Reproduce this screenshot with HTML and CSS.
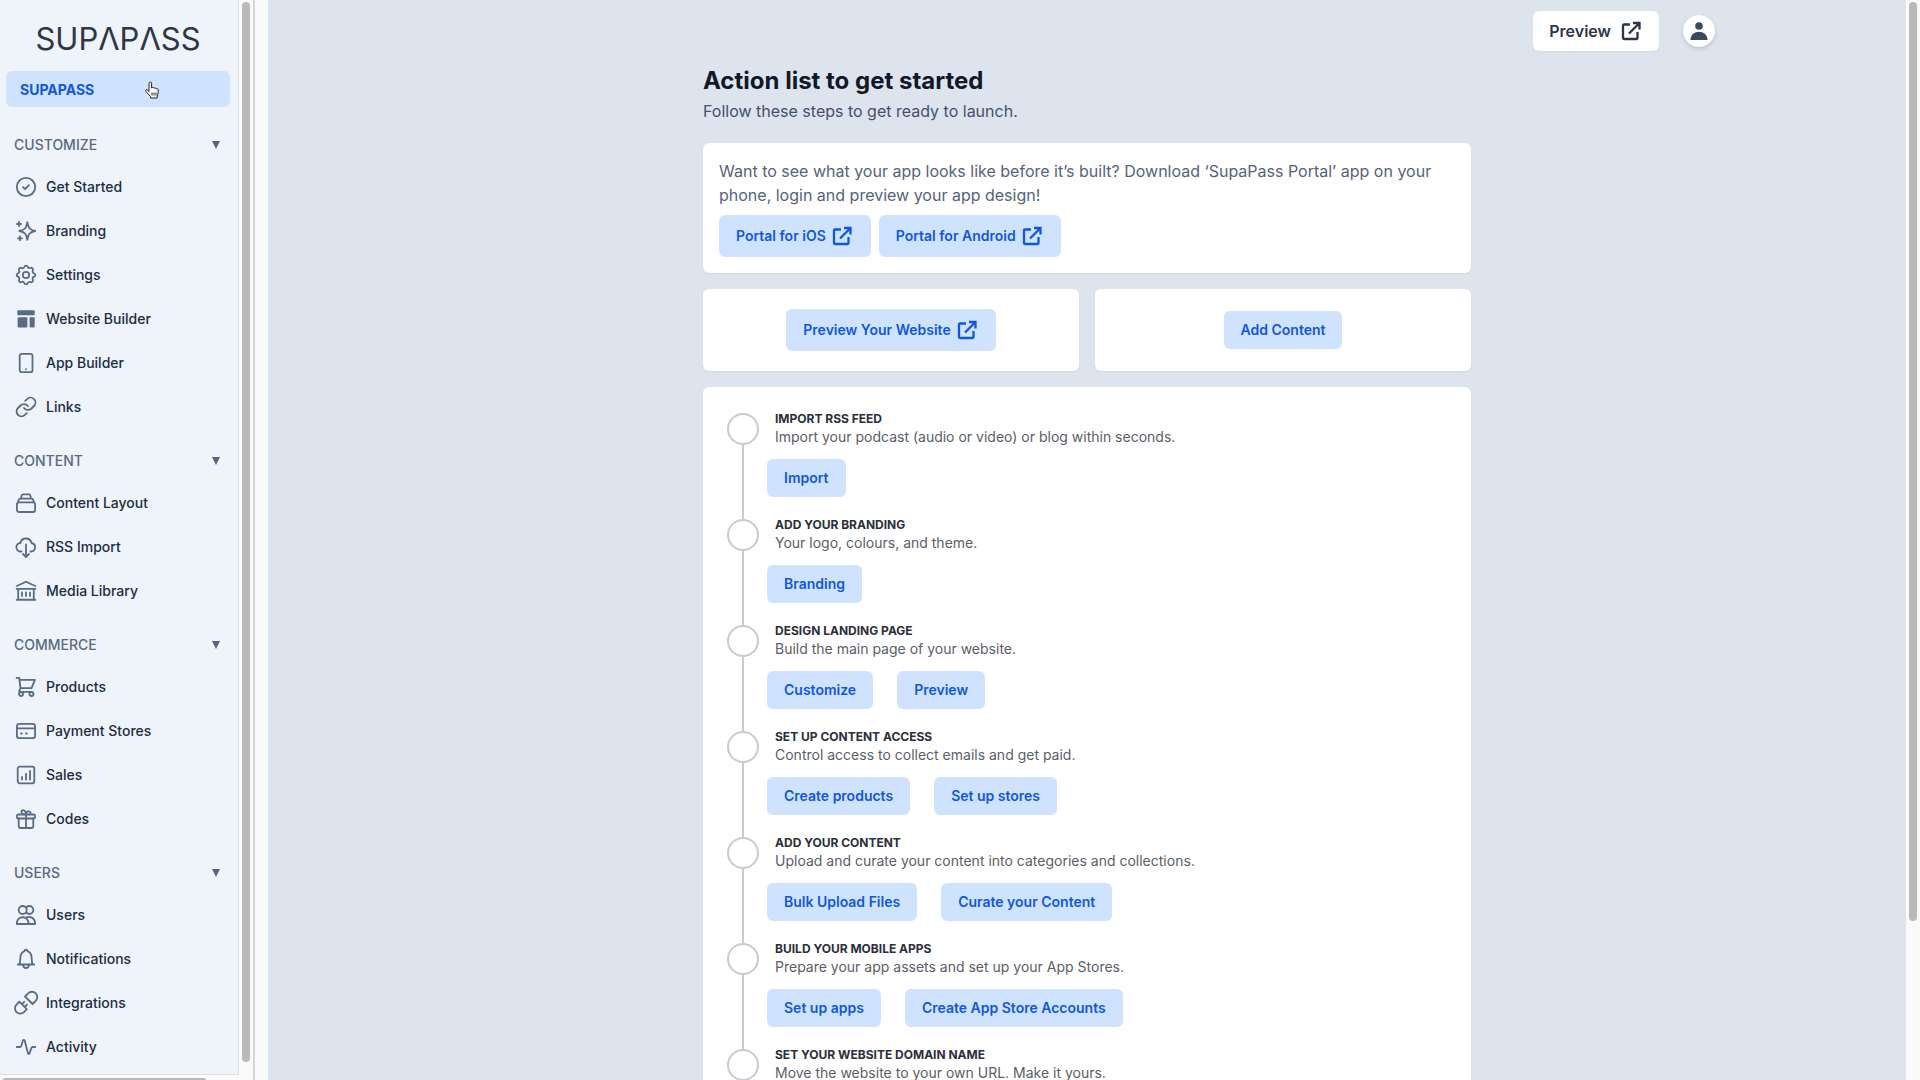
FILE: index.html
```
<!DOCTYPE html>
<html lang="en">

<head>
    <meta charset="utf-8">
    <title>SupaPass</title>
    <link rel="stylesheet" href="styles.css">
</head>

<body>
    <svg class="sprite" aria-hidden="true">
        <symbol id="i-external" viewBox="0 0 24 24">
            <path d="M11 5.500H5a1 1 0 0 0-1 1V19a1 1 0 0 0 1 1h12.500a1 1 0 0 0 1-1v-6" />
            <path d="M14 4h6.500v6.500M20 4.500L10 14.500" />
        </symbol>
    </svg>

    <aside class="side-panel">
        <div class="sidebar">
            <div class="logo" role="img" aria-label="SupaPass">SUPΛPΛSS</div>
            <button class="account-btn">SUPAPASS
                <svg class="hand" viewBox="0 0 16 18">
                    <path d="M5 10.500V2.300a1.300 1.300 0 0 1 2.600 0V7c.3-.8 2.200-.7 2.400.3.500-.7 2-.5 2.200.5.600-.6 2-.2 2 1v3c0 1.500-.8 2.200-1 3.200V17H6.500v-1.500L2 10.500c-1-1.300.6-2.600 1.800-1.400z" />
                    <path d="M8 11.500v3M10 11.500v3M12 11.500v3" />
                </svg>
            </button>

            <nav class="menu">
                <button class="menu-head">CUSTOMIZE <span class="arrow"></span></button>
                <a href="#" class="item">
                    <svg class="icon" viewBox="0 0 24 24"><circle cx="12" cy="12" r="9.200" /><path d="M9 12.200l2 1.800 4-3.800" /></svg>
                    Get Started</a>
                <a href="#" class="item">
                    <svg class="icon" viewBox="0 0 24 24"><path d="M13.300 3.200c.8 5.500 2.200 7.600 7.900 8.800-5.700 1.200-7.100 3.300-7.900 8.800-.8-5.500-2.200-7.600-7.900-8.800 5.700-1.200 7.100-3.300 7.900-8.800zM5 3v4M3 5h4M6 17.300v4M4 19.300h4" /></svg>
                    Branding</a>
                <a href="#" class="item">
                    <svg class="icon" viewBox="0 0 24 24"><circle cx="12" cy="12" r="3.200" /><path d="M10.300 3.900c.5-1.800 2.900-1.800 3.400 0a1.900 1.900 0 0 0 2.600 1.100c1.600-.9 3.400.9 2.500 2.500a1.900 1.900 0 0 0 1.200 2.800c1.700.5 1.700 2.900 0 3.400a1.900 1.900 0 0 0-1.200 2.800c.9 1.600-.9 3.400-2.500 2.500a1.900 1.900 0 0 0-2.600 1.100c-.5 1.800-2.900 1.800-3.400 0A1.900 1.900 0 0 0 7.600 19c-1.600.9-3.400-.9-2.500-2.500A1.900 1.900 0 0 0 4 13.700c-1.800-.5-1.800-2.900 0-3.400a1.900 1.900 0 0 0 1.100-2.800C4.200 5.900 6 4.100 7.600 5a1.900 1.900 0 0 0 2.700-1.100z" /></svg>
                    Settings</a>
                <a href="#" class="item">
                    <svg class="icon solid" viewBox="0 0 24 24"><rect x="3.300" y="3.300" width="17.400" height="5" rx="1" /><rect x="3.600" y="10.300" width="9.800" height="10.200" rx="1" /><rect x="15.600" y="10.300" width="5.100" height="10.200" rx="1" /></svg>
                    Website Builder</a>
                <a href="#" class="item">
                    <svg class="icon" viewBox="0 0 24 24"><rect x="5.700" y="2.800" width="12.800" height="18.400" rx="2" /><path d="M12 18.200v.1" /></svg>
                    App Builder</a>
                <a href="#" class="item">
                    <svg class="icon" viewBox="0 0 24 24"><path d="M10 13a5 5 0 0 0 7.500.500l2.500-2.500a4.700 4.700 0 0 0-6.900-6.900l-1.900 1.800M14 11a5 5 0 0 0-7.500-.500L4 13a4.700 4.700 0 0 0 6.900 6.900l1.900-1.800" /></svg>
                    Links</a>

                <button class="menu-head">CONTENT <span class="arrow"></span></button>
                <a href="#" class="item">
                    <svg class="icon" viewBox="0 0 24 24"><rect x="2.900" y="11.400" width="18.200" height="9.600" rx="2" /><path d="M4 11.400l.8-2.600a1.700 1.700 0 0 1 1.600-1.200h11.200a1.700 1.700 0 0 1 1.600 1.200l.8 2.600M7 7.600l.6-2.900A1.500 1.500 0 0 1 9 3.400h6a1.500 1.500 0 0 1 1.400 1.300l.6 2.900" /></svg>
                    Content Layout</a>
                <a href="#" class="item">
                    <svg class="icon" viewBox="0 0 24 24"><path d="M7.500 16.500h-.600A4.200 4.200 0 0 1 6.300 8a5.800 5.800 0 0 1 11.300 0 4.300 4.300 0 0 1-.5 8.500h-.6M12 9.500v12M9 19l3 3 3-3" /></svg>
                    RSS Import</a>
                <a href="#" class="item">
                    <svg class="icon" viewBox="0 0 24 24"><path d="M2.800 7L12 2.800 21.200 7M4.200 9.800h15.600v10.800H4.200zM2.600 9.800h18.800M2.600 20.800h18.800M8 13.500v3.500M12 13.500v3.500M16 13.500v3.500" /></svg>
                    Media Library</a>

                <button class="menu-head">COMMERCE <span class="arrow"></span></button>
                <a href="#" class="item">
                    <svg class="icon" viewBox="0 0 24 24"><path d="M2.600 2.900h2.600l1.300 10.300h11l3.400-8.400H5.500M6.500 13.200l-1.200 2.600c-.2.500 0 1 .6 1H17" /><circle cx="7" cy="19" r="2" /><circle cx="17.500" cy="19" r="2" /></svg>
                    Products</a>
                <a href="#" class="item">
                    <svg class="icon" viewBox="0 0 24 24"><rect x="2.900" y="4.800" width="18.200" height="14.400" rx="2.500" /><path d="M3 9.300h18M7 14.500h.8M12 14.500h.8" /></svg>
                    Payment Stores</a>
                <a href="#" class="item">
                    <svg class="icon" viewBox="0 0 24 24"><rect x="3.700" y="3.700" width="16.600" height="16.600" rx="2" /><path d="M8 14v2.500M12 11v5.500M16 8v8.500" /></svg>
                    Sales</a>
                <a href="#" class="item">
                    <svg class="icon" viewBox="0 0 24 24"><rect x="2.900" y="7.500" width="18.200" height="4" rx="1.500" /><path d="M4.700 11.500v7.500a2 2 0 0 0 2 2h10.600a2 2 0 0 0 2-2v-7.500M12 7.500v13.500M12 7.300c-1.300.4-4.600 0-4.600-2.300 0-2.600 4.300-2.800 4.600 2.300.3-3.800 4.600-3.600 4.600-1.300 0 .8-.6 1.300-1 1.500" /></svg>
                    Codes</a>

                <button class="menu-head">USERS <span class="arrow"></span></button>
                <a href="#" class="item">
                    <svg class="icon" viewBox="0 0 24 24"><circle cx="8.700" cy="7" r="4" /><path d="M12.200 4.600a4 4 0 1 1 0 4.800M2.800 21c-.3-9 12-9 11.800 0zM11.500 14.800c4-2.300 9.800-.3 9.600 6.200h-6.500" /></svg>
                    Users</a>
                <a href="#" class="item">
                    <svg class="icon" viewBox="0 0 24 24"><path d="M3.800 17.500h16.400M5.500 17.500c1-3 .5-6.500 1.300-9.500.6-2.400 2.500-3.500 3.600-3.900.3-1.800 2.900-1.800 3.200 0 1.100.4 3 1.500 3.600 3.900.8 3 .3 6.500 1.300 9.500M9 17.700c.2 4.400 5.800 4.400 6 0" /></svg>
                    Notifications</a>
                <a href="#" class="item">
                    <svg class="icon" viewBox="0 0 24 24"><path d="M11 5.500l3.200-3.200a5.300 5.300 0 0 1 7.500 7.500L18.500 13zM5.300 10.700l-2.800 2.900a5.300 5.300 0 0 0 7.500 7.500l2.800-2.900zM7.800 13.200l2.400-2.400M10.600 16l2.400-2.400" /></svg>
                    Integrations</a>
                <a href="#" class="item">
                    <svg class="icon" viewBox="0 0 24 24"><path d="M2.800 12H6c.6 0 .9-.3 1.200-1l1.700-5.300c.3-1 1.500-1 1.800 0l3.300 12.600c.3 1 1.300 1 1.600 0l1.700-5.200c.3-.8.6-1.100 1.400-1.100h2.500" /></svg>
                    Activity</a>
            </nav>
        </div>
        <div class="scroll-y side-scroll"></div>
        <div class="scroll-x"></div>
    </aside>

    <main class="main">
        <header class="topbar">
            <button class="preview-btn">Preview <svg class="ext"><use href="#i-external" /></svg></button>
            <button class="avatar" aria-label="Account">
                <svg viewBox="0 0 20 20"><circle cx="10" cy="5" r="3.800" /><path d="M1.500 19c0-11 17-11 17 0z" /></svg>
            </button>
        </header>

        <div class="content">
            <h1>Action list to get started</h1>
            <p class="subtitle">Follow these steps to get ready to launch.</p>

            <section class="card portal">
                <p>Want to see what your app looks like before it’s built? Download ‘SupaPass Portal’ app on your phone, login and preview your app design!</p>
                <div class="portal-btns">
                    <a href="#" class="btn">Portal for iOS <svg class="ext"><use href="#i-external" /></svg></a>
                    <a href="#" class="btn">Portal for Android <svg class="ext"><use href="#i-external" /></svg></a>
                </div>
            </section>

            <div class="two-cards">
                <section class="card">
                    <a href="#" class="btn">Preview Your Website <svg class="ext"><use href="#i-external" /></svg></a>
                </section>
                <section class="card">
                    <a href="#" class="btn">Add Content</a>
                </section>
            </div>

            <ol class="card steps">
                <li class="step">
                    <h2>IMPORT RSS FEED</h2>
                    <p>Import your podcast (audio or video) or blog within seconds.</p>
                    <div class="step-btns"><button class="btn">Import</button></div>
                </li>
                <li class="step">
                    <h2>ADD YOUR BRANDING</h2>
                    <p>Your logo, colours, and theme.</p>
                    <div class="step-btns"><button class="btn">Branding</button></div>
                </li>
                <li class="step">
                    <h2>DESIGN LANDING PAGE</h2>
                    <p>Build the main page of your website.</p>
                    <div class="step-btns"><button class="btn">Customize</button><button class="btn">Preview</button></div>
                </li>
                <li class="step">
                    <h2>SET UP CONTENT ACCESS</h2>
                    <p>Control access to collect emails and get paid.</p>
                    <div class="step-btns"><button class="btn">Create products</button><button class="btn">Set up stores</button></div>
                </li>
                <li class="step">
                    <h2>ADD YOUR CONTENT</h2>
                    <p>Upload and curate your content into categories and collections.</p>
                    <div class="step-btns"><button class="btn">Bulk Upload Files</button><button class="btn">Curate your Content</button></div>
                </li>
                <li class="step">
                    <h2>BUILD YOUR MOBILE APPS</h2>
                    <p>Prepare your app assets and set up your App Stores.</p>
                    <div class="step-btns"><button class="btn">Set up apps</button><button class="btn">Create App Store Accounts</button></div>
                </li>
                <li class="step">
                    <h2>SET YOUR WEBSITE DOMAIN NAME</h2>
                    <p>Move the website to your own URL. Make it yours.</p>
                </li>
            </ol>
        </div>
    </main>
    <div class="scroll-y page-scroll"></div>
</body>

</html>
```

FILE: styles.css
```
*,
*::before,
*::after {
    box-sizing: border-box;
    margin: 0;
    padding: 0;
}

body {
    display: flex;
    height: 100vh;
    overflow: hidden;
    font-family: Inter, sans-serif;
    font-size: 14px;
    line-height: 20px;
    background: #fafafa;
}

button {
    font: inherit;
    border: none;
    background: none;
    cursor: pointer;
}

a {
    text-decoration: none;
}

.sprite {
    display: none;
}

/* sidebar */
.side-panel {
    display: grid;
    grid-template-columns: 239px 14px;
    grid-template-rows: 1fr 5px;
    border-right: 2px solid #d3d5d9;
    margin-right: 13px;
    flex-shrink: 0;
}

.sidebar {
    overflow: hidden;
    padding: 16px 8px 0 6px;
    background: #eff3fa;
    border-right: 1px solid #dcdfe6;
    border-bottom: 1px solid #dcdfe6;
}

.logo {
    height: 46px;
    margin-bottom: 9px;
    line-height: 46px;
    text-align: center;
    font-size: 31px;
    font-weight: 400;
    color: #2d3748;
}

.account-btn {
    display: flex;
    align-items: center;
    justify-content: space-between;
    width: 100%;
    height: 36px;
    padding: 2px 70px 0 14px;
    border-radius: 6px;
    background: #cfe3ff;
    color: #1058db;
    font-weight: 700;
}

.hand {
    width: 16px;
    height: 18px;
    fill: #fff;
    stroke: #222;
    stroke-width: 1;
}

.menu {
    padding-top: 6px;
}

.menu-head {
    display: flex;
    align-items: center;
    justify-content: space-between;
    width: 100%;
    height: 24px;
    margin: 20px 0 8px;
    padding: 0 10px 0 8px;
    color: #5a6980;
    font-weight: 500;
}

.arrow {
    border: 4px solid transparent;
    border-top: 8px solid #56657c;
    border-bottom: 0;
}

.item {
    display: flex;
    align-items: center;
    gap: 8px;
    height: 44px;
    padding-left: 8px;
    color: #212d40;
    font-weight: 500;
}

.icon {
    width: 24px;
    height: 24px;
    overflow: visible;
    fill: none;
    stroke: #5a6b85;
    stroke-width: 1.8;
    stroke-linecap: round;
    stroke-linejoin: round;
}

.icon.solid {
    fill: #5a6b85;
    stroke: none;
}

/* scrollbars */
.scroll-y::before,
.scroll-x::before {
    content: "";
    display: block;
    border-radius: 4px;
    background: #b9b9b9;
}

.scroll-y {
    padding: 2px 3px;
}

.scroll-y::before {
    width: 8px;
}

.side-scroll::before {
    height: 99%;
}

.page-scroll {
    width: 14px;
    flex-shrink: 0;
}

.page-scroll::before {
    height: 85.4%;
}

.scroll-x {
    overflow: hidden;
    padding: 3px 2px 0;
}

.scroll-x::before {
    width: 205px;
    height: 8px;
}

/* main */
.main {
    flex: 1;
    overflow: hidden;
    background: #dde4ee;
}

.topbar {
    display: flex;
    align-items: center;
    justify-content: flex-end;
    gap: 24px;
    max-width: 1280px;
    margin: 0 auto;
    padding: 11px 12px 0;
}

.preview-btn {
    display: flex;
    align-items: center;
    gap: 8px;
    height: 40px;
    padding: 0 16px;
    border-radius: 6px;
    background: #fff;
    color: #2d3748;
    font-size: 16px;
    font-weight: 600;
    box-shadow: 0 1px 2px rgba(0, 0, 0, 0.05);
}

.avatar {
    display: flex;
    align-items: center;
    justify-content: center;
    width: 32px;
    height: 32px;
    border-radius: 50%;
    background: #fff;
    box-shadow: 0 2px 4px rgba(0, 0, 0, 0.15);
}

.avatar svg {
    width: 20px;
    height: 20px;
    fill: #3c485c;
}

.content {
    max-width: 768px;
    margin: 0 auto;
    padding-top: 14px;
}

h1 {
    font-size: 24px;
    line-height: 32px;
    font-weight: 700;
    color: #111827;
}

.subtitle {
    margin: 2px 0 20px;
    font-size: 16px;
    line-height: 24px;
    color: #44516a;
}

.card {
    border-radius: 6px;
    background: #fff;
    box-shadow: 0 1px 2px rgba(0, 0, 0, 0.05);
}

.portal {
    padding: 16px;
}

.portal p {
    font-size: 16px;
    line-height: 24px;
    color: #55637a;
}

.portal-btns {
    display: flex;
    gap: 8px;
    margin-top: 8px;
}

.btn {
    display: inline-flex;
    align-items: center;
    gap: 4px;
    padding: 8px 16px;
    border: 1px solid transparent;
    border-radius: 6px;
    background: #cfe3ff;
    color: #1058db;
    font-weight: 600;
}

.ext {
    width: 24px;
    height: 24px;
    fill: none;
    stroke: currentColor;
    stroke-width: 2.3;
}

.two-cards {
    display: grid;
    grid-template-columns: 1fr 1fr;
    gap: 16px;
    margin: 16px 0;
}

.two-cards .card {
    display: flex;
    align-items: center;
    justify-content: center;
    padding: 20px;
}

.steps {
    padding: 24px;
    list-style: none;
}

.step {
    position: relative;
    min-height: 106px;
    padding-left: 48px;
}

/* line joining the circles */
.step::before {
    content: "";
    position: absolute;
    top: 34px;
    bottom: -2px;
    left: 15px;
    width: 2px;
    background: #c9cacd;
}

.step::after {
    content: "";
    position: absolute;
    top: 2px;
    left: 0;
    width: 32px;
    height: 32px;
    border: 2px solid #c9cacd;
    border-radius: 50%;
}

.step h2 {
    font-size: 12px;
    line-height: 16px;
    font-weight: 700;
    color: #2b2f3a;
}

.step p {
    color: #5b5e68;
}

.step-btns {
    display: flex;
    gap: 24px;
    margin: 12px 0 0 -8px;
}
```
